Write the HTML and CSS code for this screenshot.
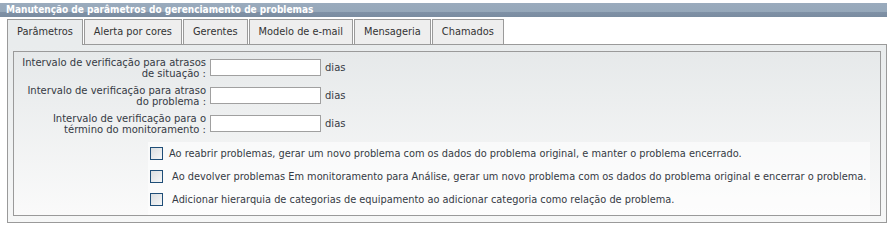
FILE: index.html
```html
<!DOCTYPE html>
<html lang="pt-BR">
<head>
<meta charset="utf-8">
<title>Manutenção de parâmetros</title>
<link rel="stylesheet" href="styles.css">
</head>
<body>
<div class="titlebar">Manutenção de parâmetros do gerenciamento de problemas</div>
<div class="wrap">
  <div class="tabs">
    <div class="tab active">Parâmetros</div>
    <div class="tab">Alerta por cores</div>
    <div class="tab">Gerentes</div>
    <div class="tab">Modelo de e-mail</div>
    <div class="tab">Mensageria</div>
    <div class="tab">Chamados</div>
  </div>
  <div class="panel">
    <div class="inner">
      <div class="form">
        <div class="row">
          <label class="lbl">Intervalo de verificação para atrasos<br>de situação :</label>
          <input class="field" type="text">
          <span class="unit">dias</span>
        </div>
        <div class="row">
          <label class="lbl">Intervalo de verificação para atraso<br>do problema :</label>
          <input class="field" type="text">
          <span class="unit">dias</span>
        </div>
        <div class="row">
          <label class="lbl">Intervalo de verificação para o<br>término do monitoramento :</label>
          <input class="field" type="text">
          <span class="unit">dias</span>
        </div>
      </div>
      <div class="checks">
        <label class="check"><input type="checkbox" class="cb"><span class="ctext">Ao reabrir problemas, gerar um novo problema com os dados do problema original, e manter o problema encerrado.</span></label>
        <label class="check"><input type="checkbox" class="cb"><span class="ctext">&nbsp;Ao devolver problemas Em monitoramento para Análise, gerar um novo problema com os dados do problema original e encerrar o problema.</span></label>
        <label class="check"><input type="checkbox" class="cb"><span class="ctext">&nbsp;Adicionar hierarquia de categorias de equipamento ao adicionar categoria como relação de problema.</span></label>
      </div>
    </div>
  </div>
</div>
</body>
</html>
```
FILE: styles.css
```css
html, body {
  margin: 0;
  padding: 0;
  background: #ffffff;
  font-family: "DejaVu Sans", Verdana, sans-serif;
  font-size: 10px;
  color: #353a44;
}

.titlebar {
  margin-top: 3px;
  width: 881px;
  height: 14px;
  line-height: 13px;
  padding-left: 6px;
  color: #ffffff;
  font-family: "DejaVu Sans Condensed", "DejaVu Sans", sans-serif;
  font-weight: bold;
  font-size: 10px;
  background: linear-gradient(#9aabbd 0, #96a8ba 62%, #7f91a6 66%, #7a8ca0 100%);
}

.wrap {
  margin-top: 2px;
  padding-left: 7px;
}

.tabs {
  display: flex;
  gap: 1px;
  height: 25px;
}

.tab {
  height: 24px;
  line-height: 23px;
  padding: 0 9px;
  border: 1px solid #9a9a9a;
  border-bottom: none;
  background: #eeeeee;
  color: #333;
  font-size: 9.8px;
}

.tab.active {
  background: #e9eced;
  height: 25px;
  position: relative;
  z-index: 1;
}

.panel {
  width: 868px;
  height: 166px;
  border: 1px solid #9a9a9a;
  padding: 6px 5px 5px 5px;
  background: linear-gradient(#e9eced, #f6f7f7);
}

.inner {
  height: 163px;
  border: 1px solid #9a9a9a;
  background: linear-gradient(#e6e9ea, #fafafa);
  display: flex;
  flex-direction: column;
}

.form {
  padding-top: 4px;
  display: flex;
  flex-direction: column;
  gap: 5px;
}

.row {
  display: flex;
  align-items: center;
  height: 23px;
}

.lbl {
  width: 192px;
  text-align: right;
  line-height: 11px;
  font-size: 10px;
}

.field {
  margin: 0 0 0 4px;
  width: 111px;
  height: 17px;
  box-sizing: border-box;
  border: 1px solid #a0a0a0;
  background: #ffffff;
  padding: 0;
}

.unit {
  margin-left: 4px;
  font-size: 10px;
}

.checks {
  margin: 7px 0 0 134px;
  width: 722px;
  height: 70px;
  background: rgba(255, 255, 255, 0.55);
  padding-top: 5px;
  display: flex;
  flex-direction: column;
  gap: 10px;
}

.check {
  display: flex;
  align-items: center;
  height: 13px;
}

.cb {
  appearance: none;
  -webkit-appearance: none;
  margin: 0 6px 0 2px;
  width: 13px;
  height: 13px;
  border: 1px solid #1f4e78;
  background: linear-gradient(135deg, #d9dde0, #f6f7f8);
  box-sizing: border-box;
  flex: none;
}

.ctext {
  font-size: 9.8px;
  white-space: nowrap;
}
```
